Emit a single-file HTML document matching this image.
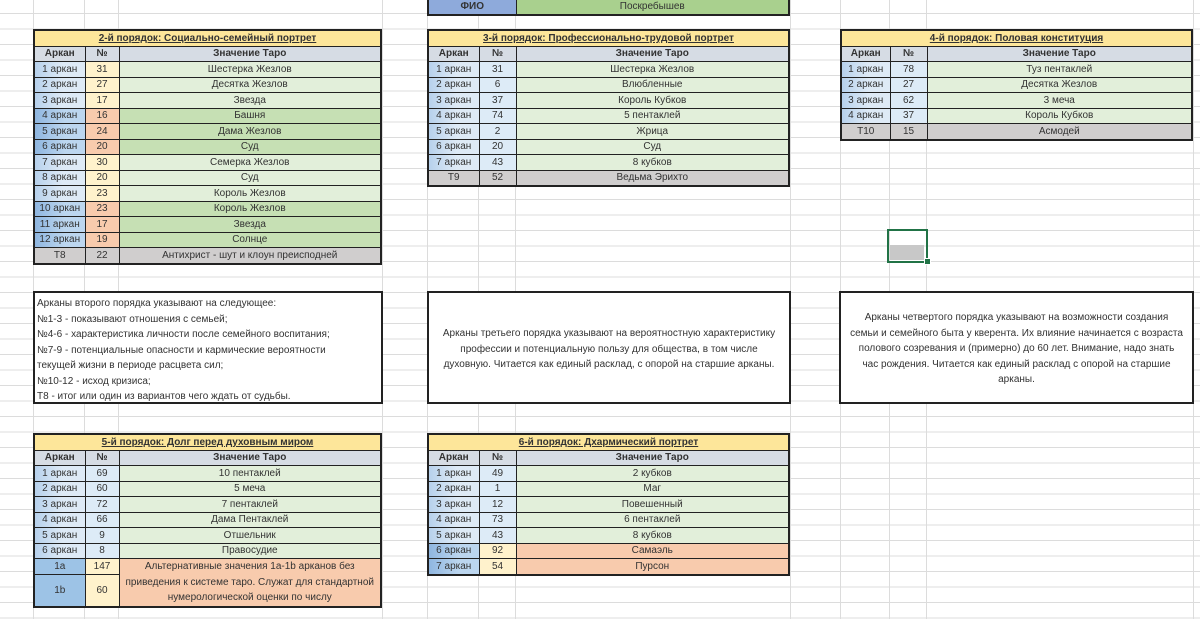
<!DOCTYPE html>
<html><head><meta charset="utf-8">
<style>
html,body{margin:0;padding:0;background:#fff;width:1200px;height:619px;overflow:hidden;position:relative}
body{font-family:"Liberation Sans","DejaVu Sans",sans-serif;font-size:10px;color:#333}
svg.grid{position:absolute;left:0;top:0}
table{position:absolute;border-collapse:collapse;table-layout:fixed;border:2px solid #222}
td{border:1px solid #222;height:14.5px;padding:0;text-align:center;white-space:nowrap;line-height:13px;overflow:hidden}
td.t{background:#fde69a;font-weight:bold;text-decoration:underline}
td.h{background:#d6dce4;font-weight:bold}
.a{background:linear-gradient(90deg,#b7d1ec,#deeaf6 55%)}
.A{background:linear-gradient(90deg,#8fb6e0,#bcd6ef 60%)}
.n{background:#fff2cc}
.N{background:#f8cbad}
.b{background:#ddebf7}
.g{background:#e2efda}
.G{background:#c6e0b4}
.o{background:#f8cbad}
.x{background:#d0cece}
.box{position:absolute;border:2px solid #222;background:#fff;box-sizing:border-box;font-size:10px;line-height:15.5px}
</style></head><body>
<svg class="grid" width="1200" height="619">
<g stroke="#dcdcdc" stroke-width="1">
<line x1="33.5" y1="0" x2="33.5" y2="619"/><line x1="84.5" y1="0" x2="84.5" y2="619"/><line x1="118.5" y1="0" x2="118.5" y2="619"/><line x1="382.5" y1="0" x2="382.5" y2="619"/><line x1="427.5" y1="0" x2="427.5" y2="619"/><line x1="478.5" y1="0" x2="478.5" y2="619"/><line x1="515.5" y1="0" x2="515.5" y2="619"/><line x1="790.5" y1="0" x2="790.5" y2="619"/><line x1="840.5" y1="0" x2="840.5" y2="619"/><line x1="889.5" y1="0" x2="889.5" y2="619"/><line x1="926.5" y1="0" x2="926.5" y2="619"/><line x1="1193.5" y1="0" x2="1193.5" y2="619"/>
</g>
<g stroke="#dcdcdc" stroke-width="1" id="hl"></g>
<path stroke="#dcdcdc" fill="none" d="M0 13.5H1200M0 29H1200M0 44.5H1200M0 60H1200M0 75.5H1200M0 91H1200M0 106.5H1200M0 122H1200M0 137.5H1200M0 153H1200M0 168.5H1200M0 184H1200M0 199.5H1200M0 215H1200M0 230.5H1200M0 246H1200M0 261.5H1200M0 277H1200M0 292.5H1200M0 308H1200M0 323.5H1200M0 339H1200M0 354.5H1200M0 370H1200M0 385.5H1200M0 401H1200M0 416.5H1200M0 432H1200M0 447.5H1200M0 463H1200M0 478.5H1200M0 494H1200M0 509.5H1200M0 525H1200M0 540.5H1200M0 556H1200M0 571.5H1200M0 587H1200M0 602.5H1200M0 618H1200"/>
</svg>

<!-- FIO -->
<table style="left:427px;top:-3px;width:363px">
<col style="width:88px"><col>
<tr><td style="background:#8eaadb;font-weight:bold">ФИО</td><td style="background:#a9d08e">Поскребышев</td></tr>
</table>

<!-- Table 2 -->
<table style="left:33px;top:29px;width:349px">
<col style="width:51px"><col style="width:34px"><col>
<tr><td class="t" colspan="3">2-й порядок: Социально-семейный портрет</td></tr>
<tr><td class="h">Аркан</td><td class="h">№</td><td class="h">Значение Таро</td></tr>
<tr><td class="a">1 аркан</td><td class="n">31</td><td class="g">Шестерка Жезлов</td></tr>
<tr><td class="a">2 аркан</td><td class="n">27</td><td class="g">Десятка Жезлов</td></tr>
<tr><td class="a">3 аркан</td><td class="n">17</td><td class="g">Звезда</td></tr>
<tr><td class="A">4 аркан</td><td class="N">16</td><td class="G">Башня</td></tr>
<tr><td class="A">5 аркан</td><td class="N">24</td><td class="G">Дама Жезлов</td></tr>
<tr><td class="A">6 аркан</td><td class="N">20</td><td class="G">Суд</td></tr>
<tr><td class="a">7 аркан</td><td class="n">30</td><td class="g">Семерка Жезлов</td></tr>
<tr><td class="a">8 аркан</td><td class="n">20</td><td class="g">Суд</td></tr>
<tr><td class="a">9 аркан</td><td class="n">23</td><td class="g">Король Жезлов</td></tr>
<tr><td class="A">10 аркан</td><td class="N">23</td><td class="G">Король Жезлов</td></tr>
<tr><td class="A">11 аркан</td><td class="N">17</td><td class="G">Звезда</td></tr>
<tr><td class="A">12 аркан</td><td class="N">19</td><td class="G">Солнце</td></tr>
<tr><td class="x">T8</td><td class="x">22</td><td class="x">Антихрист - шут и клоун преисподней</td></tr>
</table>

<!-- Table 3 -->
<table style="left:427px;top:29px;width:363px">
<col style="width:51px"><col style="width:37px"><col>
<tr><td class="t" colspan="3">3-й порядок: Профессионально-трудовой портрет</td></tr>
<tr><td class="h">Аркан</td><td class="h">№</td><td class="h">Значение Таро</td></tr>
<tr><td class="a">1 аркан</td><td class="b">31</td><td class="g">Шестерка Жезлов</td></tr>
<tr><td class="a">2 аркан</td><td class="b">6</td><td class="g">Влюбленные</td></tr>
<tr><td class="a">3 аркан</td><td class="b">37</td><td class="g">Король Кубков</td></tr>
<tr><td class="a">4 аркан</td><td class="b">74</td><td class="g">5 пентаклей</td></tr>
<tr><td class="a">5 аркан</td><td class="b">2</td><td class="g">Жрица</td></tr>
<tr><td class="a">6 аркан</td><td class="b">20</td><td class="g">Суд</td></tr>
<tr><td class="a">7 аркан</td><td class="b">43</td><td class="g">8 кубков</td></tr>
<tr><td class="x">T9</td><td class="x">52</td><td class="x">Ведьма Эрихто</td></tr>
</table>

<!-- Table 4 -->
<table style="left:840px;top:29px;width:353px">
<col style="width:49px"><col style="width:37px"><col>
<tr><td class="t" colspan="3">4-й порядок: Половая конституция</td></tr>
<tr><td class="h">Аркан</td><td class="h">№</td><td class="h">Значение Таро</td></tr>
<tr><td class="a">1 аркан</td><td class="b">78</td><td class="g">Туз пентаклей</td></tr>
<tr><td class="a">2 аркан</td><td class="b">27</td><td class="g">Десятка Жезлов</td></tr>
<tr><td class="a">3 аркан</td><td class="b">62</td><td class="g">3 меча</td></tr>
<tr><td class="a">4 аркан</td><td class="b">37</td><td class="g">Король Кубков</td></tr>
<tr><td class="x">T10</td><td class="x">15</td><td class="x">Асмодей</td></tr>
</table>

<!-- selected cell -->
<div style="position:absolute;left:887px;top:229px;width:37px;height:30px;border:2px solid #217346;box-sizing:content-box"></div>
<div style="position:absolute;left:890px;top:245px;width:34px;height:15px;background:#c8c8c8"></div>
<div style="position:absolute;left:924px;top:258px;width:5px;height:5px;background:#217346;border:1px solid #fff"></div>

<!-- Boxes -->
<div class="box" style="left:33px;top:291px;width:350px;height:113px;padding:3px 0 0 2px;text-align:left">
Арканы второго порядка указывают на следующее:<br>№1-3 - показывают отношения с семьей;<br>№4-6 - характеристика личности после семейного воспитания;<br>№7-9 - потенциальные опасности и кармические вероятности<br>текущей жизни в периоде расцвета сил;<br>№10-12 - исход кризиса;<br>T8 - итог или один из вариантов чего ждать от судьбы.
</div>
<div class="box" style="left:427px;top:291px;width:364px;height:113px;padding-top:33px;text-align:center">
Арканы третьего порядка указывают на вероятностную характеристику<br>профессии и потенциальную пользу для общества, в том числе<br>духовную. Читается как единый расклад, с опорой на старшие арканы.
</div>
<div class="box" style="left:839px;top:291px;width:355px;height:113px;padding-top:17px;text-align:center">
Арканы четвертого порядка указывают на возможности создания<br>семьи и семейного быта у кверента. Их влияние начинается с возраста<br>полового созревания и (примерно) до 60 лет. Внимание, надо знать<br>час рождения. Читается как единый расклад с опорой на старшие<br>арканы.
</div>

<!-- Table 5 -->
<table style="left:33px;top:433px;width:349px">
<col style="width:51px"><col style="width:34px"><col>
<tr><td class="t" colspan="3">5-й порядок: Долг перед духовным миром</td></tr>
<tr><td class="h">Аркан</td><td class="h">№</td><td class="h">Значение Таро</td></tr>
<tr><td class="a">1 аркан</td><td class="b">69</td><td class="g">10 пентаклей</td></tr>
<tr><td class="a">2 аркан</td><td class="b">60</td><td class="g">5 меча</td></tr>
<tr><td class="a">3 аркан</td><td class="b">72</td><td class="g">7 пентаклей</td></tr>
<tr><td class="a">4 аркан</td><td class="b">66</td><td class="g">Дама Пентаклей</td></tr>
<tr><td class="a">5 аркан</td><td class="b">9</td><td class="g">Отшельник</td></tr>
<tr><td class="a">6 аркан</td><td class="b">8</td><td class="g">Правосудие</td></tr>
<tr><td style="background:#9dc3e6">1a</td><td class="n">147</td><td class="o" rowspan="3" style="white-space:normal;line-height:15.5px">Альтернативные значения 1a-1b арканов без приведения к системе таро. Служат для стандартной нумерологической оценки по числу</td></tr>
<tr><td style="background:#9dc3e6" rowspan="2">1b</td><td class="n" rowspan="2">60</td></tr>
<tr></tr>
</table>

<!-- Table 6 -->
<table style="left:427px;top:433px;width:363px">
<col style="width:51px"><col style="width:37px"><col>
<tr><td class="t" colspan="3">6-й порядок: Дхармический портрет</td></tr>
<tr><td class="h">Аркан</td><td class="h">№</td><td class="h">Значение Таро</td></tr>
<tr><td class="a">1 аркан</td><td class="b">49</td><td class="g">2 кубков</td></tr>
<tr><td class="a">2 аркан</td><td class="b">1</td><td class="g">Маг</td></tr>
<tr><td class="a">3 аркан</td><td class="b">12</td><td class="g">Повешенный</td></tr>
<tr><td class="a">4 аркан</td><td class="b">73</td><td class="g">6 пентаклей</td></tr>
<tr><td class="a">5 аркан</td><td class="b">43</td><td class="g">8 кубков</td></tr>
<tr><td class="A">6 аркан</td><td class="n">92</td><td class="o">Самаэль</td></tr>
<tr><td class="A">7 аркан</td><td class="n">54</td><td class="o">Пурсон</td></tr>
</table>
</body></html>
